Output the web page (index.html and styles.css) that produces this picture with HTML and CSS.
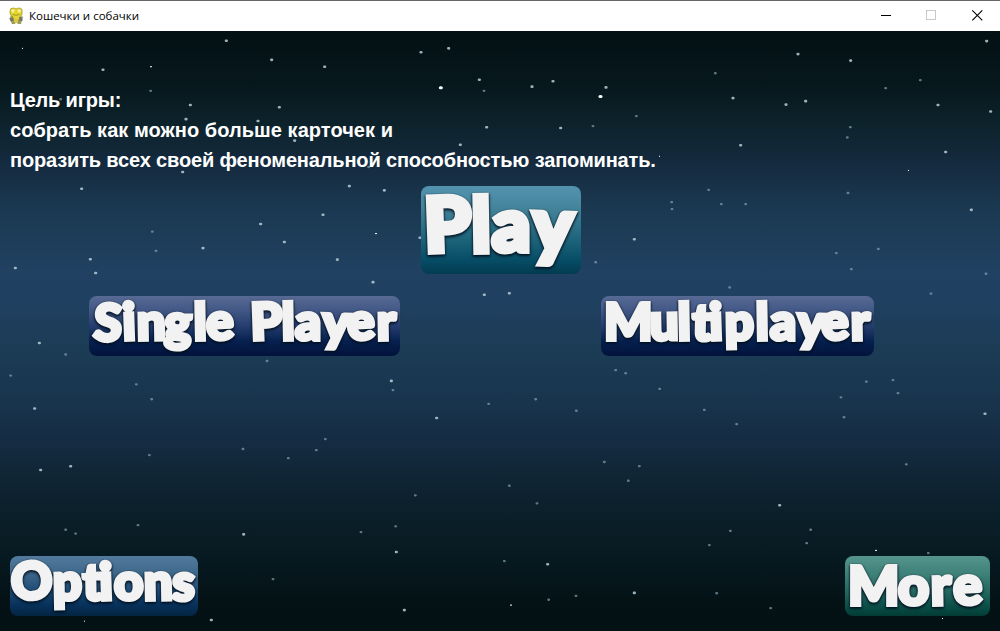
FILE: index.html
```html
<!DOCTYPE html>
<html lang="ru">
<head>
<meta charset="utf-8">
<title>Кошечки и собачки</title>
<link rel="stylesheet" href="styles.css">
</head>
<body>
<div class="window">
  <header class="titlebar">
    <svg class="app-icon" width="16" height="18" viewBox="0 0 16 18">
      <path d="M3 8 L1.5 12 L3 15 L4 17 H7 L8 15 L10 17 H13 L14 13 L14.5 9 L11 10 Z" fill="#a29a58"/>
      <path d="M2 4 Q2 1 5 1 Q7 1 8 2 Q9 1 12 1 Q15 2 14 5 Q15 8 12 9.500 L11.500 13 H5 L5 10 Q1 8 2 4Z" fill="#e5d62f" stroke="#9a8c26" stroke-width=".7"/>
      <path d="M1.500 11 h4 v3 h-3 z M11 10 h3.500 v4 h-3z" fill="#77776b"/>
      <path d="M6 12.500h4v3H6z" fill="#d8cb42"/>
      <circle cx="5" cy="3.800" r="1.600" fill="#f6f1a8"/><circle cx="11.300" cy="3.800" r="1.600" fill="#f6f1a8"/>
      <path d="M4.500 7.500 Q8 9 11.500 7.500" fill="none" stroke="#8a8234" stroke-width=".8"/>
    </svg>
    <span class="title">Кошечки и собачки</span>
    <svg class="controls" width="138" height="30" viewBox="0 0 138 30" fill="none" shape-rendering="crispEdges">
      <path d="M19 14.500h10" stroke="#000"/>
      <rect x="64.500" y="9.500" width="9" height="9" stroke="#c8c8c8"/>
      <path d="M110.300 9.300l10 10M120.300 9.300l-10 10" stroke="#000" stroke-width="1.100" shape-rendering="auto"/>
    </svg>
  </header>
  <main class="scene">
    <svg class="stars" width="1000" height="600" viewBox="0 0 1000 600">
      <g transform="translate(0 -1) scale(.33333 .38265)">
        <path class="star dim" d="M451 159h2M456 527h2M467 577h2M196 848h2M31 903h2M408 926h2M454 965h2M447 1111h2M728 1095h2M864 1119h2M948 1098h2M975 1069h2M1245 1216h2M196 1306h2M226 1316h2M413 1294h2M1082 1312h2M1186 1297h2M818 1435h2M800 865h2M1178 941h2M1465 977h2M1451 159h2M181 181h2M1105 358h2M1462 347h2"/>
        <path class="star mid" d="M678 28h2M814 78h2M308 104h2M973 96h2M1262 58h2M1345 48h2M1437 130h2M570 196h2M557 233h2M837 202h2M773 238h2M883 289h2M1459 254h2M1380 300h2M547 371h2M244 415h2M1047 408h2M1152 419h2M968 483h2M781 507h2M852 554h2M608 570h2M270 599h2M286 635h2M45 622h2M1011 600h2M1118 659h2M1452 692h2M117 818h2M103 989h2M1173 917h2M1309 1014h2M121 1150h2M211 1140h2M730 1318h2M1188 1364h2M1212 1516h2M633 1542h2M1259 543h2"/>
        <path class="star bright" d="M1321 151h3"/>
        <path class="spark" d="M66 48h3M450 96h6M1125 532h6M252 1545h3M100 270h3"/>
      </g>
      <g transform="translate(500 -1) scale(.33333 .38265)">
        <path class="star dim" d="M645 113h2M1156 152h2M1260 131h2M408 225h2M278 251h2M1050 254h2M1041 281h2M625 418h2M514 450h2M515 468h2M663 455h2M736 455h2M1043 426h2M1008 583h2M1053 625h2M1134 572h2M1457 637h2M1292 689h2M286 607h2M688 673h2M346 889h2M376 897h2M478 938h2M106 965h2M228 995h2M612 993h2M709 1030h2M1098 919h2M1178 915h2M1193 949h2M1022 960h2M1031 1012h2M312 1129h2M417 1140h2M384 1178h2M27 1191h2M110 1237h2M1218 1135h2M690 1309h2M627 1346h2M931 1306h2M919 1341h2M12 1388h2M145 1489h2M227 1479h2M649 1472h2M811 1511h2M1284 1367h2"/>
        <path class="star mid" d="M1459 29h2M893 63h2M1051 80h2M95 148h2M158 134h2M317 150h2M698 178h2M857 195h2M916 186h2M1313 196h2M1471 213h2M181 256h2M721 301h2M1336 319h2M1413 470h2M402 547h2M27 688h2M1454 1003h2M838 1242h2M142 1396h2M402 1471h2"/>
        <path class="star bright" d="M300 174h3"/>
        <path class="spark" d="M477 330h3M1224 367h3M1125 1360h6M30 1503h6M1326 1538h3"/>
      </g>
    </svg>
    <section class="goal">
      <p class="g1">Цель игры:</p>
      <p class="g2">собрать как можно больше карточек и</p>
      <p class="g3">поразить всех своей феноменальной способностью запоминать.</p>
    </section>
    <nav class="menu">
      <div class="row center">
        <button class="btn play"><svg width="160" height="88" viewBox="0 0 160 88"><text y="66 66 65 65" font-size="75" x="4 51 71 111" rotate="-2 -1 0 2">Play</text></svg></button>
      </div>
      <div class="row modes">
        <button class="btn mode"><svg width="311" height="60" viewBox="0 0 311 60"><text y="44" font-size="51" x="4 34 48 75 105 118 148 162 193 206 233 259 288" rotate="3 -2 -1 2 -1 -3 0 -2 -1 0 2 -3 -1">Single Player</text></svg></button>
        <button class="btn mode"><svg width="273" height="60" viewBox="0 0 273 60"><text y="44" font-size="51" x="3 49 77 91 109 124 155 169 196 221 250" rotate="0 -1 -1 1 -2 -1 -1 0 2 -3 -1">Multiplayer</text></svg></button>
      </div>
      <div class="row bottom">
        <button class="btn options"><svg width="188" height="60" viewBox="0 0 188 60"><text y="44" font-size="51" x="2 43 73 90 104 134 162" rotate="-3 -1 -1 -2 0 -1 1">Options</text></svg></button>
        <button class="btn more"><svg width="145" height="60" viewBox="0 0 145 60"><text y="49" font-size="54" x="3 53 86 109" rotate="0 0 -1 -3">More</text></svg></button>
      </div>
    </nav>
  </main>
</div>
</body>
</html>
```
FILE: styles.css
```css
* { box-sizing: border-box; }
body { margin: 0; overflow: hidden; }
.window { width: 1000px; height: 631px; display: flex; flex-direction: column; }
.titlebar {
  height: 31px; flex: none; display: flex; align-items: center;
  padding-left: 8px; background: #fff; border-top: 1px solid #686468;
}
.app-icon { margin-right: 5px; }
.title { font: 11.5px/30px "Open Sans", "Noto Sans", sans-serif; color: #000; }
.controls { margin-left: auto; }
.scene {
  flex: 1; position: relative; display: flex; flex-direction: column;
  background: linear-gradient(#031014 0, #07181d 55px, #0d232c 95px, #152b40 135px, #1a3850 175px, #204161 240px, #1f4060 270px, #1c3c56 315px, #19354e 365px, #142b41 415px, #0d222e 465px, #071a21 525px, #041216 570px, #031014 600px);
}
.stars { position: absolute; left: 0; top: 0; }
.star { fill: none; stroke-linecap: round; vector-effect: non-scaling-stroke; stroke-width: 2.3px; }
.dim { stroke: #8fa9b6; stroke-opacity: .65; }
.mid { stroke: #b9cdd6; stroke-opacity: .85; stroke-width: 2.6px; }
.bright { stroke: #f4ffff; stroke-width: 3px; }
.spark { stroke: #fff; stroke-width: 1px; vector-effect: non-scaling-stroke; }
.goal { position: relative; padding: 54px 0 0 10px; height: 155px; color: #fff; }
.goal p { margin: 0; width: max-content; font: bold 20px/30px "Liberation Sans", Arial, sans-serif; white-space: nowrap; }
.g1 { letter-spacing: -.2px; }
.g2 { letter-spacing: .05px; }
.g3 { letter-spacing: -.155px; }
.menu { position: relative; flex: 1; display: flex; flex-direction: column; }
.row { display: flex; }
.center { justify-content: center; padding-left: 1px; }
.modes { padding: 22px 126px 0 89px; justify-content: space-between; }
.bottom { margin-top: auto; padding: 0 10px 15px; justify-content: space-between; }
.btn { border: 0; padding: 0; margin: 0; border-radius: 8px; overflow: visible; display: block; }
.btn svg { display: block; overflow: visible; }
.btn text {
  font-family: Lato, sans-serif; font-weight: 900; fill: #f2f2f2;
  stroke: #f2f2f2; stroke-width: 4px; stroke-linejoin: miter; stroke-miterlimit: 3;
  filter: drop-shadow(0 1px 1px #001020) drop-shadow(0 1px 1px #00102099);
}
.play text { stroke-width: 6px; }
.play { background: linear-gradient(#5393ae, #44849b 25%, #1e647a 60%, #064c65 85%, #033c50); }
.mode { background: linear-gradient(#576a94, #465b88 20%, #233c6d 52%, #06204f 75%, #02133c); }
.options { background: linear-gradient(#527a9e, #416b8d 25%, #224f77 55%, #08335d 80%, #042442); }
.more { background: linear-gradient(#55958e, #3e8179 30%, #236760 60%, #084b44 88%, #033a34); }
```
